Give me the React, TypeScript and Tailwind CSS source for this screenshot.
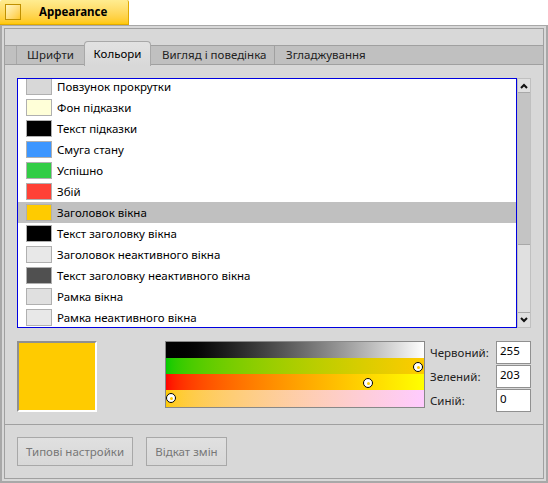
const rows = [
  { label: 'Повзунок прокрутки', color: '#d8d8d8' },
  { label: 'Фон підказки', color: '#ffffd8' },
  { label: 'Текст підказки', color: '#000000' },
  { label: 'Смуга стану', color: '#3c96ff' },
  { label: 'Успішно', color: '#32cd46' },
  { label: 'Збій', color: '#ff4136' },
  { label: 'Заголовок вікна', color: '#ffcb00', selected: true },
  { label: 'Текст заголовку вікна', color: '#000000' },
  { label: 'Заголовок неактивного вікна', color: '#e8e8e8' },
  { label: 'Текст заголовку неактивного вікна', color: '#505050' },
  { label: 'Рамка вікна', color: '#e0e0e0' },
  { label: 'Рамка неактивного вікна', color: '#e8e8e8' },
];

const Knob = ({ className }: { className: string }) => (
  <div className={`absolute w-[10px] h-[10px] rounded-full border-[1.5px] border-black bg-white flex items-center justify-center ${className}`}>
    <div className="w-[3px] h-[3px] rounded-full bg-[#ffcb00]" />
  </div>
);

const Arrow = ({ up }: { up?: boolean }) => (
  <svg width="8" height="6" viewBox="0 0 8 6">
    <path d={up ? 'M1 5 L4 2 L7 5' : 'M1 1 L4 4 L7 1'} fill="none" stroke="#111" strokeWidth="2" />
  </svg>
);

export default function App() {
  return (
    <div className="w-[548px] h-[483px] bg-white overflow-hidden flex flex-col text-[11.5px] text-black font-['Noto_Sans','DejaVu_Sans',sans-serif]">
      <div className="h-[25px] w-[129px] shrink-0 flex items-center bg-gradient-to-b from-[#ffec90] to-[#ffc800] border-r border-b border-[#e0aa00] rounded-t-[2px]">
        <div className="ml-[5px] w-[16px] h-[16px] border border-[#c09000] bg-gradient-to-br from-[#fff6c0] to-[#ffc81e]" />
        <span className="ml-[18px] font-bold text-[11.5px]">Appearance</span>
      </div>
      <div className="flex-1 min-h-0 border-2 border-t border-[#a8a8a8] bg-[#d8d8d8] p-[2px]">
        <div className="h-full flex flex-col border border-[#a0a0a0] bg-[#d8d8d8]">
          <div className="h-[16px] shrink-0" />
          <div className="relative h-[20px] shrink-0 flex bg-[#c0c0c0] border-y border-[#a0a0a0] text-[#222]">
            <div className="w-[12px] border-r border-[#a8a8a8]" />
            <div className="w-[67px] flex items-center justify-center">Шрифти</div>
            <div className="relative -top-[5px] h-[25px] w-[67px] flex items-center justify-center bg-gradient-to-b from-[#e2e2e2] to-[#d8d8d8] border border-[#a8a8a8] border-b-0 rounded-t-[4px] text-black">Кольори</div>
            <div className="w-[124px] pl-[11px] flex items-center border-r border-[#a0a0a0]">Вигляд і поведінка</div>
            <div className="pl-[11px] flex items-center">Згладжування</div>
          </div>
          <div className="flex-1 min-h-0 flex flex-col px-[12px] pt-[13px]">
            <div className="flex h-[250px] shrink-0">
              <div className="w-[500px] shrink-0 h-full bg-white border border-[#0000e0] overflow-hidden">
                <div className="-mt-[3px]">
                  {rows.map((r) => (
                    <div key={r.label} className={`h-[21px] flex items-center pl-[8px] ${r.selected ? 'bg-[#c0c0c0]' : ''}`}>
                      <div className="w-[26px] h-[17px] border border-[#b0b0b0]" style={{ background: r.color }} />
                      <span className="ml-[5px]">{r.label}</span>
                    </div>
                  ))}
                </div>
              </div>
              <div className="w-[14px] h-full flex flex-col border border-[#c0c0c0] bg-[#c4c4c4]">
                <div className="h-[14px] flex items-center justify-center bg-[#e0e0e0] border-b border-[#a8a8a8]"><Arrow up /></div>
                <div className="flex-1 flex flex-col justify-end">
                  <div className="h-[69px] bg-[#e0e0e0] border-t border-[#a8a8a8] border-b" />
                </div>
                <div className="h-[14px] flex items-center justify-center bg-[#e0e0e0]"><Arrow /></div>
              </div>
            </div>
            <div className="flex mt-[13px]">
              <div className="w-[80px] h-[71px] bg-[#ffcb00] border-2 border-[#909090] border-r-white border-b-white" />
              <div className="relative ml-[68px] w-[260px] h-[67px] border border-[#888888] flex flex-col">
                <div className="h-[16px] bg-gradient-to-r from-black to-white" />
                <div className="h-[16px] bg-gradient-to-r from-[#00cb00] to-[#ffcb00]" />
                <div className="h-[16px] bg-gradient-to-r from-[#ff0000] to-[#ffff00]" />
                <div className="h-[17px] bg-gradient-to-r from-[#ffcb00] to-[#ffcbff]" />
                <Knob className="left-[247px] top-[20px]" />
                <Knob className="left-[197px] top-[36px]" />
                <Knob className="left-[0px] top-[51px]" />
              </div>
              <div className="ml-[5px] flex flex-col gap-[1px] text-[#222]">
                {[['Червоний:', '255'], ['Зелений:', '203'], ['Синій:', '0']].map(([l, v]) => (
                  <div key={l} className="flex h-[23px] items-center">
                    <span className="w-[66px]">{l}</span>
                    <div className="w-[35px] h-[23px] bg-white border border-[#909090] pl-[3px] text-black leading-[18px]">{v}</div>
                  </div>
                ))}
              </div>
            </div>
          </div>
          <div className="h-[54px] shrink-0 border-t border-[#a0a0a0] flex items-start gap-[13px] pl-[12px] pt-[12px]">
            <div className="w-[116px] h-[29px] flex items-center justify-center bg-gradient-to-b from-[#e0e0e0] to-[#d8d8d8] border border-[#a8a8a8] text-[#777]">Типові настройки</div>
            <div className="w-[81px] h-[29px] flex items-center justify-center bg-gradient-to-b from-[#e0e0e0] to-[#d8d8d8] border border-[#a8a8a8] text-[#777]">Відкат змін</div>
          </div>
        </div>
      </div>
    </div>
  );
}
